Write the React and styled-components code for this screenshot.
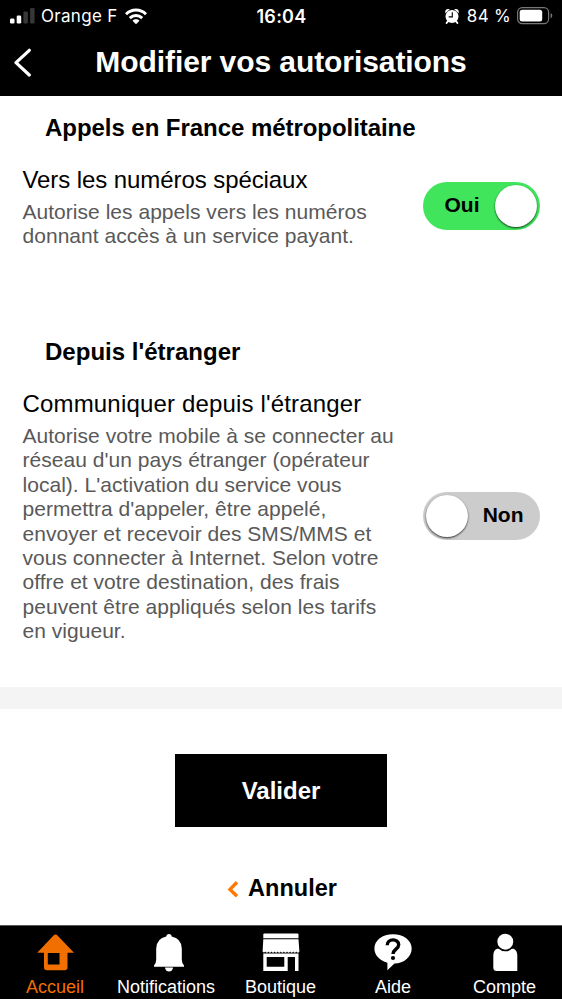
import React, { useState } from "react";
import styled, { createGlobalStyle } from "styled-components";

const GlobalStyle = createGlobalStyle`
  * {
    box-sizing: border-box;
  }
  body {
    margin: 0;
    background: #fff;
    font-family: "Liberation Sans", Arial, sans-serif;
  }
  button {
    font-family: inherit;
    border: none;
    padding: 0;
    background: none;
    cursor: pointer;
  }
`;

const Screen = styled.div`
  width: 562px;
  height: 999px;
  display: flex;
  flex-direction: column;
  overflow: hidden;
  background: #fff;
  color: #000;
`;

const Header = styled.header`
  height: 96px;
  background: #000;
  color: #fff;
`;

const StatusBar = styled.div`
  display: grid;
  grid-template-columns: 1fr auto 1fr;
  align-items: center;
  height: 32px;
  padding: 0 9px 0 10px;
  font-family: Inter, sans-serif;
  font-size: 17px;
`;

const StatusGroup = styled.div`
  display: flex;
  align-items: center;
  justify-content: ${({ $end }) => ($end ? "flex-end" : "flex-start")};
`;

const StatusText = styled.span`
  letter-spacing: ${({ $spacing }) => $spacing || "0"};
  margin: ${({ $margin }) => $margin || "0"};
  white-space: nowrap;
`;

const Clock = styled.span`
  font-size: 18px;
  font-weight: 600;
  letter-spacing: 0.25px;
`;

const TitleBar = styled.div`
  display: grid;
  grid-template-columns: 48px 1fr 48px;
  align-items: center;
  height: 60px;
`;

const BackButton = styled.button`
  display: flex;
  padding-left: 13px;
`;

const Title = styled.h1`
  margin: 0;
  font-size: 30px;
  line-height: 34px;
  font-weight: 700;
  letter-spacing: -0.08px;
  text-align: center;
  white-space: nowrap;
`;

const Content = styled.main`
  flex: 1;
  min-height: 0;
`;

const Section = styled.section`
  height: ${({ $height }) => $height};
  padding: 18px 22.5px 0 22.5px;
`;

const SectionTitle = styled.h2`
  margin: 0 0 24px 22.5px;
  font-size: 24px;
  line-height: 28px;
  font-weight: 700;
  letter-spacing: ${({ $spacing }) => $spacing};
  white-space: nowrap;
`;

const SettingRow = styled.div`
  display: flex;
  align-items: center;
  justify-content: space-between;
`;

const SettingText = styled.div`
  width: 380px;
`;

const SettingName = styled.div`
  font-size: 24px;
  line-height: 28px;
  margin-bottom: 6px;
  letter-spacing: ${({ $spacing }) => $spacing};
  white-space: nowrap;
`;

const SettingDetail = styled.div`
  font-size: 21px;
  line-height: 24.4px;
  letter-spacing: 0.03px;
  color: #595959;
  white-space: nowrap;
`;

const Toggle = styled.button`
  display: flex;
  align-items: center;
  flex-direction: ${({ $on }) => ($on ? "row" : "row-reverse")};
  justify-content: space-between;
  width: 117px;
  height: 48px;
  padding: ${({ $on }) => ($on ? "0 3px 0 22px" : "0 16px 0 3px")};
  margin-top: -2px;
  border-radius: 24px;
  background: ${({ $on }) => ($on ? "#40e55c" : "#ccc")};
`;

const ToggleLabel = styled.span`
  font-size: 21px;
  line-height: 24px;
  font-weight: 700;
  color: #000;
  margin-bottom: 2px;
`;

const ToggleKnob = styled.span`
  width: 42px;
  height: 42px;
  border-radius: 50%;
  background: #fff;
  box-shadow: 0 1px 2px rgba(0, 0, 0, 0.75);
`;

const Divider = styled.div`
  height: 22px;
  background: #f4f4f4;
`;

const Actions = styled.div`
  display: flex;
  flex-direction: column;
  align-items: center;
  padding-top: 45px;
`;

const SubmitButton = styled.button`
  width: 212px;
  height: 73px;
  padding-top: 1px;
  background: #000;
  color: #fff;
  font-size: 24px;
  font-weight: 700;
`;

const CancelButton = styled.button`
  display: flex;
  align-items: center;
  gap: 9px;
  margin: 47px 0 0 2px;
  font-size: 23.5px;
  line-height: 28px;
  font-weight: 700;
  color: #000;
`;

const TabBar = styled.nav`
  display: grid;
  grid-template-columns: 110px 112px 117px 108px 115px;
  height: 74px;
  background: #000;
  border-top: 1px solid #555;
`;

const Tab = styled.button`
  display: flex;
  flex-direction: column;
  align-items: center;
  padding-top: 6px;
  color: ${({ $active }) => ($active ? "#f16e00" : "#fff")};
  font-size: 18px;
  line-height: 20px;
  white-space: nowrap;

  svg {
    display: block;
    margin-bottom: 5px;
  }
`;

const SignalIcon = () => (
  <svg width="26" height="18" viewBox="0 0 26 18" fill="#fff">
    <rect x="0" y="11.5" width="4.5" height="5" rx="1.3" />
    <rect x="6.7" y="8.5" width="4.5" height="8" rx="1.3" />
    <rect x="13.4" y="4.5" width="4.5" height="12" rx="1.3" fill="#373737" />
    <rect x="20.1" y="1" width="4.5" height="15.5" rx="1.3" fill="#373737" />
  </svg>
);

const WifiIcon = () => (
  <svg width="22" height="17" viewBox="0 0 22 17" fill="none" stroke="#fff" strokeWidth="2.9">
    <path d="M1 6.2C6.6.6 15.4.6 21 6.2" />
    <path d="M4.8 10.1c3.5-3.4 8.9-3.4 12.4 0" />
    <path d="M11 16.2L7.5 12.7c1.9-1.8 5.1-1.8 7 0z" fill="#fff" stroke="none" />
  </svg>
);

const AlarmIcon = () => (
  <svg width="14" height="17" viewBox="0 0 14 17">
    <circle cx="7" cy="8.4" r="6.5" fill="#fff" />
    <path d="M.3 5.2C-.3 2 1.600.500 4.800 1.300zM13.700 5.200C14.300 2 12.400.500 9.200 1.300z" fill="#fff" />
    <path d="M3 13.200L1.600 15M11 13.200l1.400 1.800" stroke="#fff" strokeWidth="2" strokeLinecap="round" />
    <path d="M7.300 4.300v4.600H3.700" fill="none" stroke="#000" strokeWidth="1.100" />
  </svg>
);

const BatteryIcon = () => (
  <svg width="36" height="18" viewBox="0 0 36 18">
    <rect x=".6" y=".6" width="31" height="16" rx="4.6" fill="none" stroke="#777" strokeWidth="1.2" />
    <rect x="2.7" y="2.7" width="22.5" height="11.8" rx="2.5" fill="#fff" />
    <path d="M33.6 6v5.4q1.7-.8 1.7-2.7T33.6 6z" fill="#777" />
  </svg>
);

const BackIcon = () => (
  <svg width="20" height="30" viewBox="0 0 20 30" fill="none" stroke="#fff" strokeWidth="3.2" strokeLinecap="round" strokeLinejoin="round">
    <path d="M16.3 3.3L3 15.7l13.3 12.3" />
  </svg>
);

const CancelIcon = () => (
  <svg width="12" height="20" viewBox="0 0 12 20" fill="none" stroke="#ff7900" strokeWidth="3.4">
    <path d="M10 4.200L3 11.400l7 6.800" />
  </svg>
);

const HomeIcon = () => (
  <svg width="38" height="40" viewBox="0 0 38 40" fill="currentColor">
    <path
      fillRule="evenodd"
      d="M17.500 3.600Q19.500 1.600 21.500 3.600L38 20.800H31.500V35.500Q31.500 38.300 28.700 38.300H10.900Q8 38.300 8 35.500V20.800H1.200zM11.800 21V32.600H23.500V21z"
    />
  </svg>
);

const BellIcon = () => (
  <svg width="38" height="40" viewBox="0 0 38 40" fill="currentColor">
    <path d="M19.300 4.600Q19.500 2 22 2t2.700 2.600Q34.400 6.500 34.800 16.500V27.500q0 4 2.200 6v1.300H7v-1.300q2.200-2 2.200-6V16.500Q9.600 6.500 19.300 4.600z" />
    <path d="M18 35.400h8q-.5 4-4 4t-4-4z" />
  </svg>
);

const ShopIcon = () => (
  <svg width="38" height="40" viewBox="0 0 38 40" fill="currentColor">
    <path d="M1.300 2.500Q1.300 1.500 2.300 1.500h33.200Q36.500 1.500 36.500 2.500V6.300H1.300z" />
    <path d="M1.300 7.300h35.200l.9 12.200q-1.500 2.400-3.100 0-1.500 2.400-3.100 0-1.500 2.400-3.100 0-1.500 2.400-3.100 0-1.500 2.400-3.100 0-1.500 2.400-3.100 0-1.500 2.400-3.100 0-1.500 2.400-3.100 0-1.500 2.400-3.100 0-1.500 2.400-3.100 0-1.500 2.400-3.100 0-1.300 1.900-2.700 0z" />
    <path
      fillRule="evenodd"
      d="M1.300 21.500h35.200v17.500h-3.500V25h-7.300v14H1.300zM4.700 25v9.800h17.600V25z"
    />
  </svg>
);

const HelpIcon = () => (
  <svg width="38" height="40" viewBox="0 0 38 40">
    <path
      d="M19 2.200C29.500 2.200 37.700 8.200 37.700 16.500S30 31.300 20.500 31.600L13.400 38.200V30.700C5.700 28.700.4 23.200.4 16.500.4 8.200 8.500 2.200 19 2.200z"
      fill="currentColor"
    />
    <path d="M13.200 13.300C13.200 6.100 24.700 6.200 24.700 12.700c0 4.300-5.700 4.600-5.700 9.300" fill="none" stroke="#000" strokeWidth="3.4" />
    <circle cx="19" cy="26" r="2.1" fill="#000" />
  </svg>
);

const AccountIcon = () => (
  <svg width="26" height="40" viewBox="0 0 26 40" fill="currentColor">
    <path d="M5 16.800H21.500Q25.300 18.500 25.300 23.500V39H4.800Q1.300 39 1.300 35.500V23.500q0-5 3.700-6.700z" />
    <circle cx="13.3" cy="9.700" r="8.800" stroke="#000" strokeWidth="1.7" />
  </svg>
);

const settings = [
  {
    id: "special",
    section: "Appels en France métropolitaine",
    sectionSpacing: "-0.05px",
    name: "Vers les numéros spéciaux",
    nameSpacing: "-0.08px",
    detail: ["Autorise les appels vers les numéros", "donnant accès à un service payant."],
    height: "224px",
  },
  {
    id: "abroad",
    section: "Depuis l'étranger",
    sectionSpacing: "0.02px",
    name: "Communiquer depuis l'étranger",
    nameSpacing: "0.17px",
    detail: [
      "Autorise votre mobile à se connecter au",
      "réseau d'un pays étranger (opérateur",
      "local). L'activation du service vous",
      "permettra d'appeler, être appelé,",
      "envoyer et recevoir des SMS/MMS et",
      "vous connecter à Internet. Selon votre",
      "offre et votre destination, des frais",
      "peuvent être appliqués selon les tarifs",
      "en vigueur.",
    ],
    height: "367px",
  },
];

const tabs = [
  { label: "Accueil", Icon: HomeIcon },
  { label: "Notifications", Icon: BellIcon },
  { label: "Boutique", Icon: ShopIcon },
  { label: "Aide", Icon: HelpIcon },
  { label: "Compte", Icon: AccountIcon },
];

const Setting = ({ item, on, onToggle }) => {
  return (
    <Section $height={item.height}>
      <SectionTitle $spacing={item.sectionSpacing}>{item.section}</SectionTitle>
      <SettingRow>
        <SettingText>
          <SettingName $spacing={item.nameSpacing}>{item.name}</SettingName>
          <SettingDetail>
            {item.detail.map((line) => (
              <div key={line}>{line}</div>
            ))}
          </SettingDetail>
        </SettingText>
        <Toggle $on={on} role="switch" aria-checked={on} onClick={onToggle}>
          <ToggleLabel>{on ? "Oui" : "Non"}</ToggleLabel>
          <ToggleKnob />
        </Toggle>
      </SettingRow>
    </Section>
  );
};

const App = () => {
  const [values, setValues] = useState({ special: true, abroad: false });
  const [active, setActive] = useState("Accueil");

  return (
    <Screen>
      <GlobalStyle />
      <Header>
        <StatusBar>
          <StatusGroup>
            <SignalIcon />
            <StatusText $margin="0 7px 0 5px" $spacing="0.3px">Orange F</StatusText>
            <WifiIcon />
          </StatusGroup>
          <Clock>16:04</Clock>
          <StatusGroup $end>
            <AlarmIcon />
            <StatusText $margin="0 6px 0 8px" $spacing="0.3px">84 %</StatusText>
            <BatteryIcon />
          </StatusGroup>
        </StatusBar>
        <TitleBar>
          <BackButton>
            <BackIcon />
          </BackButton>
          <Title>Modifier vos autorisations</Title>
        </TitleBar>
      </Header>
      <Content>
        {settings.map((item) => (
          <Setting
            key={item.id}
            item={item}
            on={values[item.id]}
            onToggle={() => setValues({ ...values, [item.id]: !values[item.id] })}
          />
        ))}
        <Divider />
        <Actions>
          <SubmitButton>Valider</SubmitButton>
          <CancelButton>
            <CancelIcon />
            Annuler
          </CancelButton>
        </Actions>
      </Content>
      <TabBar>
        {tabs.map(({ label, Icon }) => (
          <Tab key={label} $active={active === label} onClick={() => setActive(label)}>
            <Icon />
            {label}
          </Tab>
        ))}
      </TabBar>
    </Screen>
  );
};

export default App;
